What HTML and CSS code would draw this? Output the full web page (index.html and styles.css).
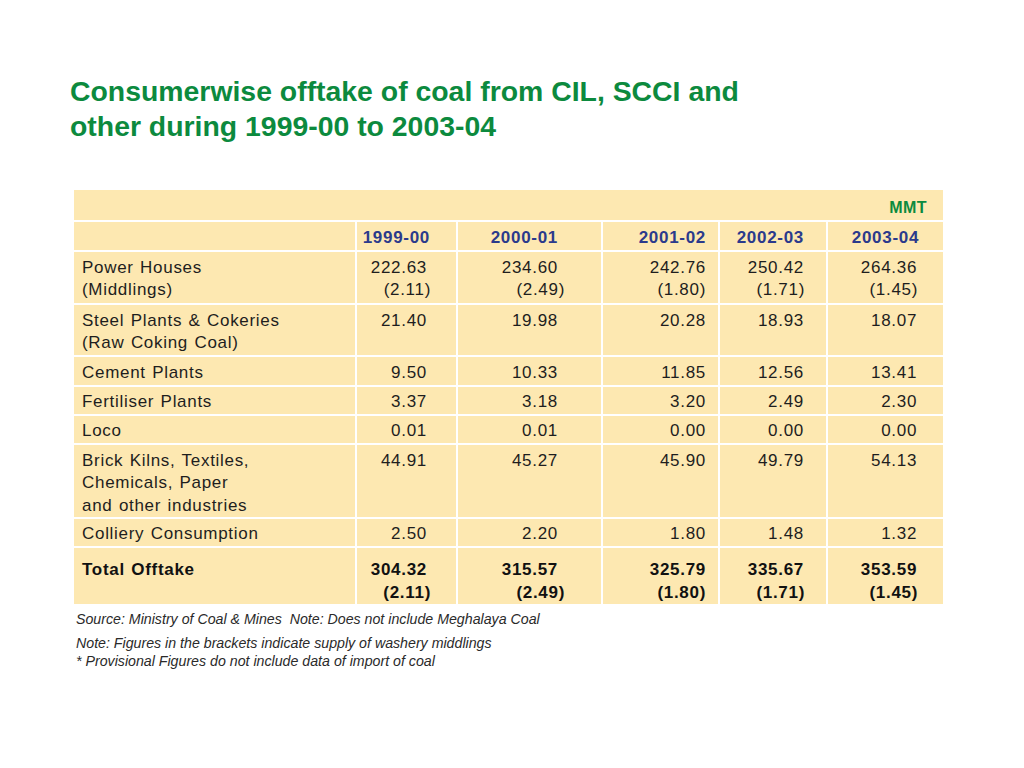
FILE: index.html
```html
<!DOCTYPE html>
<html lang="en">
<head>
<meta charset="utf-8">
<title>Consumerwise offtake of coal</title>
<link rel="stylesheet" href="styles.css">
</head>
<body>
<main class="slide">
  <h1 class="title">Consumerwise offtake of coal from CIL, SCCI and<br>other during 1999-00 to 2003-04</h1>
  <table class="data">
    <colgroup>
      <col class="c-label"><col class="c1"><col class="c2"><col class="c3"><col class="c4"><col class="c5">
    </colgroup>
    <tr class="r-unit"><td colspan="6" class="unit">MMT</td></tr>
    <tr class="r-head">
      <td></td><td class="n1">1999-00</td><td class="n2">2000-01</td><td class="n3">2001-02</td><td class="n4">2002-03</td><td class="n5">2003-04</td>
    </tr>
    <tr class="r2">
      <td class="lbl">Power Houses<br>(Middlings)</td>
      <td class="n1">222.63<span class="par">(2.11)</span></td>
      <td class="n2">234.60<span class="par">(2.49)</span></td>
      <td class="n3">242.76<span class="par">(1.80)</span></td>
      <td class="n4">250.42<span class="par">(1.71)</span></td>
      <td class="n5">264.36<span class="par">(1.45)</span></td>
    </tr>
    <tr class="r2b">
      <td class="lbl">Steel Plants &amp; Cokeries<br>(Raw Coking Coal)</td>
      <td class="n1">21.40</td><td class="n2">19.98</td><td class="n3">20.28</td><td class="n4">18.93</td><td class="n5">18.07</td>
    </tr>
    <tr class="r1a">
      <td class="lbl">Cement Plants</td>
      <td class="n1">9.50</td><td class="n2">10.33</td><td class="n3">11.85</td><td class="n4">12.56</td><td class="n5">13.41</td>
    </tr>
    <tr class="r1">
      <td class="lbl">Fertiliser Plants</td>
      <td class="n1">3.37</td><td class="n2">3.18</td><td class="n3">3.20</td><td class="n4">2.49</td><td class="n5">2.30</td>
    </tr>
    <tr class="r1">
      <td class="lbl">Loco</td>
      <td class="n1">0.01</td><td class="n2">0.01</td><td class="n3">0.00</td><td class="n4">0.00</td><td class="n5">0.00</td>
    </tr>
    <tr class="r3">
      <td class="lbl">Brick Kilns, Textiles,<br>Chemicals, Paper<br>and other industries</td>
      <td class="n1">44.91</td><td class="n2">45.27</td><td class="n3">45.90</td><td class="n4">49.79</td><td class="n5">54.13</td>
    </tr>
    <tr class="r1">
      <td class="lbl">Colliery Consumption</td>
      <td class="n1">2.50</td><td class="n2">2.20</td><td class="n3">1.80</td><td class="n4">1.48</td><td class="n5">1.32</td>
    </tr>
    <tr class="r-total">
      <td class="lbl">Total Offtake</td>
      <td class="n1">304.32<span class="par">(2.11)</span></td>
      <td class="n2">315.57<span class="par">(2.49)</span></td>
      <td class="n3">325.79<span class="par">(1.80)</span></td>
      <td class="n4">335.67<span class="par">(1.71)</span></td>
      <td class="n5">353.59<span class="par">(1.45)</span></td>
    </tr>
  </table>
  <div class="notes">
    <p class="source">Source: Ministry of Coal &amp; Mines&nbsp; Note: Does not include Meghalaya Coal</p>
    <p>Note: Figures in the brackets indicate supply of washery middlings</p>
    <p>* Provisional Figures do not include data of import of coal</p>
  </div>
</main>
</body>
</html>
```

FILE: styles.css
```css
html, body {
  margin: 0;
  padding: 0;
  background: #ffffff;
}

.slide {
  width: 1024px;
  height: 768px;
  font-family: "Liberation Sans", Arial, sans-serif;
  color: #1e1e1e;
}

.title {
  margin: 0;
  padding: 74px 0 0 70px;
  font-size: 28.4px;
  line-height: 35px;
  font-weight: bold;
  color: #0c8a3e;
}

.data {
  margin: 44px 0 0 72px;
  border-collapse: separate;
  border-spacing: 2px;
  table-layout: fixed;
  width: 873px;
  font-size: 17px;
  line-height: 22.5px;
  letter-spacing: 0.7px;
  word-spacing: 1px;
}

.c-label { width: 281px; }
.c1 { width: 99px; }
.c2 { width: 143px; }
.c3 { width: 115px; }
.c4 { width: 106px; }
.c5 { width: 115px; }

.data td {
  background: #fde8b1;
  vertical-align: top;
  padding: 4px 0 0 0;
  text-align: right;
  white-space: nowrap;
}

.data td.lbl {
  text-align: left;
  padding-left: 8px;
}

.n1 { padding-right: 29px !important; }
.n2 { padding-right: 43px !important; }
.n3 { padding-right: 12px !important; }
.n4 { padding-right: 22px !important; }
.n5 { padding-right: 26px !important; }

.par {
  display: block;
}
.n1 .par { margin-right: -4px; }
.n2 .par { margin-right: -7px; }
.n4 .par { margin-right: -1px; }
.n5 .par { margin-right: -1px; }

.r-unit { height: 30px; }
.r-unit td.unit {
  padding: 7px 16px 0 0;
  color: #0c8a3e;
  font-weight: bold;
  font-size: 16px;
  letter-spacing: 0.5px;
}

.r-head { height: 26px; }
.r-head td {
  padding-top: 5px;
  font-weight: bold;
  color: #2b3a8c;
}
.r-head td.n1 { padding-right: 26px !important; }
.r-head td.n5 { padding-right: 24px !important; }

.r2 { height: 51px; }
.r2b { height: 50px; }
.r2 td, .r2b td, .r3 td { padding-top: 5px; }
.r1a { height: 28px; }
.r1a td { padding-top: 5px; }
.r1 { height: 27px; }
.r3 { height: 72px; }

.r-total { height: 56px; }
.r-total td {
  padding-top: 11px;
  font-weight: bold;
  color: #111;
}

.notes {
  margin: 5px 0 0 76px;
  font-size: 14.2px;
  font-style: italic;
  color: #2a2a2a;
}
.notes p {
  margin: 0;
  line-height: 17.5px;
}
.notes .source {
  margin-bottom: 6.5px;
}
```
